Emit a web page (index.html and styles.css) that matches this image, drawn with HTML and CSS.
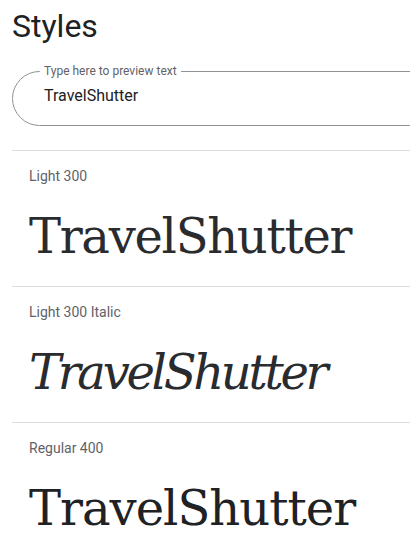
FILE: index.html
```html
<!DOCTYPE html>
<html>
<head>
<meta charset="utf-8">
<link rel="stylesheet" href="styles.css">
</head>
<body>
<div class="page">
  <h1 class="title">Styles</h1>
  <fieldset class="preview">
    <legend class="preview-label">Type here to preview text</legend>
    <div class="preview-input">TravelShutter</div>
  </fieldset>
  <section class="style-row">
    <div class="style-name">Light 300</div>
    <div class="sample sample-light">TravelShutter</div>
  </section>
  <section class="style-row">
    <div class="style-name">Light 300 Italic</div>
    <div class="sample sample-light sample-italic">TravelShutter</div>
  </section>
  <section class="style-row">
    <div class="style-name">Regular 400</div>
    <div class="sample sample-regular">TravelShutter</div>
  </section>
</div>
</body>
</html>
```
FILE: styles.css
```css
html, body {
  margin: 0;
  padding: 0;
  background: #ffffff;
  overflow: hidden;
}
body {
  font-family: Roboto, "Noto Sans", sans-serif;
  color: #202124;
}
.page {
  width: 460px;
  padding: 6px 0 0 12px;
}
.title {
  margin: 0;
  font-size: 32px;
  line-height: 40px;
  font-weight: 400;
  color: #202124;
}
.preview {
  margin: 17px 0 24px 0;
  padding: 0 0 17px 27px;
  border: 1px solid #8e9297;
  border-radius: 28px;
  min-width: 0;
}
.preview-label {
  padding: 0 4px;
  font-size: 12px;
  line-height: 16px;
  color: #5f6368;
}
.preview-input {
  margin-top: 5px;
  padding-left: 4px;
  font-size: 16px;
  line-height: 24px;
  color: #202124;
}
.style-row {
  border-top: 1px solid #dadce0;
  padding: 15px 0 14px 17px;
}
.style-name {
  font-size: 14px;
  line-height: 20px;
  color: #5f6368;
}
.sample {
  margin-top: 14px;
  font-family: "DejaVu Serif", "Liberation Serif", serif;
  font-size: 48px;
  line-height: 72px;
  color: #202124;
  white-space: nowrap;
}
.sample-light {
  font-weight: 300;
  color: #2a2b2e;
  letter-spacing: -1.3px;
}
.sample-italic {
  font-style: italic;
  letter-spacing: -3.3px;
}
.sample-regular {
  font-weight: 400;
  letter-spacing: -1px;
}
```
